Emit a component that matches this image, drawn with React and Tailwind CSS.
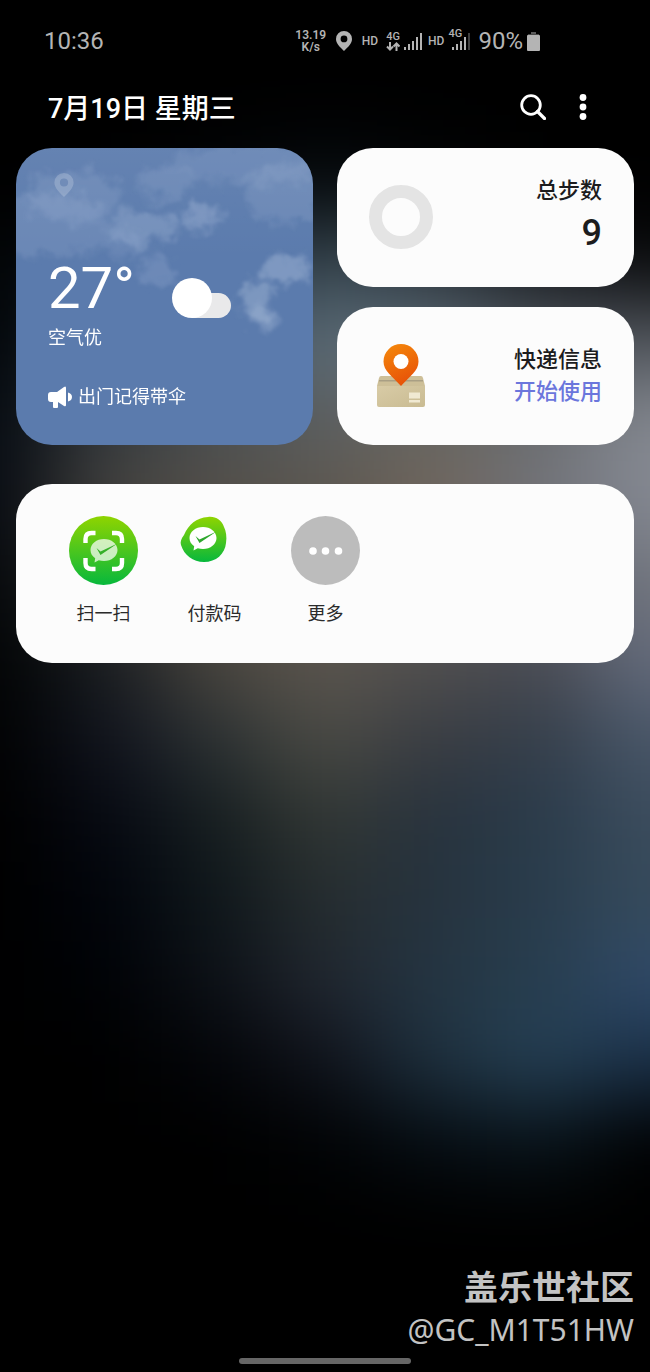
// wallpaper colours, one row every 80 units down and one column every 108 across
const wallpaper = [
  ["#000000", "#000000", "#000000", "#000000", "#000000", "#000000", "#000000"],
  ["#000000", "#000000", "#020406", "#060a0e", "#030506", "#000000", "#000000"],
  ["#020406", "#0a1218", "#202c36", "#36454f", "#2b353d", "#15191d", "#08090b"],
  ["#020509", "#20303a", "#40505c", "#5c6d79", "#5d6a75", "#50565e", "#50555c"],
  ["#070c12", "#34393e", "#4c5052", "#5c5f60", "#66655f", "#6a6d70", "#858991"],
  ["#070b12", "#45433f", "#544f48", "#5c564e", "#72665c", "#72737a", "#858993"],
  ["#05080b", "#343331", "#544c44", "#5b554e", "#605a55", "#5f6068", "#72767f"],
  ["#020405", "#1a1e22", "#4a463f", "#5c564f", "#504f4f", "#484a52", "#656c7d"],
  ["#010203", "#11141e", "#2b3133", "#4a4a44", "#393c42", "#343e4a", "#485668"],
  ["#000000", "#060912", "#161e20", "#323734", "#27323d", "#2a3b4b", "#3b4c5d"],
  ["#000000", "#01040b", "#0f171b", "#262d2f", "#26333e", "#293c4c", "#364b5c"],
  ["#000000", "#000206", "#0d1117", "#212730", "#243542", "#273e4f", "#304a6a"],
  ["#000000", "#000000", "#030509", "#10131b", "#1e303e", "#254055", "#1a3048"],
  ["#000000", "#000000", "#000000", "#010305", "#060d13", "#09141b", "#000102"],
  ["#000000", "#000000", "#000000", "#000000", "#000000", "#000000", "#000000"],
];

function Wallpaper() {
  return (
    <svg className="absolute inset-0 h-full w-full" viewBox="0 0 650 1372" preserveAspectRatio="none" aria-hidden="true">
      <defs>
        <filter id="wall" filterUnits="userSpaceOnUse" x="-200" y="0" width="1050" height="1372" colorInterpolationFilters="sRGB">
          <feGaussianBlur stdDeviation="46 38" />
        </filter>
      </defs>
      <g filter="url(#wall)">
        {wallpaper.map((row, r) =>
          row.map((fill, c) => (
            <rect
              key={`${r}-${c}`}
              x={c === 0 ? -200 : c * 108 - 54}
              y={60 + r * 80}
              width={c === 0 ? 255 : c === 6 ? 260 : 109}
              height={81}
              fill={fill}
            />
          ))
        )}
      </g>
    </svg>
  );
}

function Pin({ className }) {
  return (
    <svg viewBox="0 0 16 20" className={className} fill="currentColor" aria-hidden="true">
      <path fillRule="evenodd" d="M8 0a8 8 0 0 0-8 8c0 4.500 4 8 8 12 4-4 8-7.500 8-12a8 8 0 0 0-8-8zm0 4.500a3.400 3.400 0 1 1 0 6.800 3.400 3.400 0 0 1 0-6.800z" />
    </svg>
  );
}

function Bars({ weakLast }) {
  return (
    <svg viewBox="0 0 18 18" className="h-[18px] w-[18px]" fill="currentColor" aria-hidden="true">
      <rect x="0" y="15" width="2" height="3" />
      <rect x="4" y="12" width="2" height="6" />
      <rect x="8" y="9" width="2" height="9" />
      <rect x="12" y="5" width="2" height="13" />
      <rect x="16" y="1" width="2" height="17" opacity={weakLast ? 0.35 : 1} />
    </svg>
  );
}

function StatusBar() {
  return (
    <div className="flex h-[82px] items-center justify-between pl-11 pr-[110px] text-[#b4b4b4]">
      <div className="text-2xl">10:36</div>
      <div className="flex items-center">
        <div className="flex w-8 flex-col items-center text-[12px] font-semibold leading-3">
          <span>13.19</span>
          <span>K/s</span>
        </div>
        <Pin className="ml-[9px] h-5 w-4" />
        <span className="ml-[10px] text-[12px] font-medium">HD</span>
        <div className="ml-2 flex flex-col items-center text-[11px] font-medium leading-[10px]">
          4G
          <svg viewBox="0 0 14 9" className="h-[9px] w-[14px]" fill="none" stroke="currentColor" strokeWidth="2" aria-hidden="true">
            <path d="M4 0v7M1 4.500l3 3 3-3M10.500 9V2M7.500 4.500l3-3 3 3" />
          </svg>
        </div>
        <div className="ml-1">
          <Bars />
        </div>
        <span className="ml-[6px] text-[12px] font-medium">HD</span>
        <div className="relative ml-2">
          <Bars weakLast />
          <span className="absolute -left-1 -top-1 bg-black pr-px text-[11px] font-medium leading-[11px]">4G</span>
        </div>
        <span className="ml-2 text-2xl">90%</span>
        <svg viewBox="0 0 13 19" className="ml-1 h-[19px] w-[13px]" fill="currentColor" aria-hidden="true">
          <path d="M4 0h5v2H4z" opacity=".5" />
          <path d="M1 2h11v1H1z" opacity=".4" />
          <rect y="3" width="13" height="16" rx="1" />
        </svg>
      </div>
    </div>
  );
}

function Header() {
  return (
    <header className="flex h-[50px] items-center justify-between pl-12 pr-[58px] text-white">
      <h1 className="pt-1 text-[27px] font-medium">7月19日 星期三</h1>
      <div className="flex items-center gap-7">
        <button aria-label="搜索">
          <svg viewBox="0 0 26 26" className="h-[26px] w-[26px]" fill="none" stroke="currentColor" strokeWidth="2.800">
            <circle cx="11" cy="11" r="9.300" />
            <path d="M17.500 17.500l7 7" strokeLinecap="round" strokeWidth="3.200" />
          </svg>
        </button>
        <button aria-label="更多选项" className="px-[5px]">
          <svg viewBox="0 0 8 26" className="h-[26px] w-2" fill="currentColor">
            <circle cx="4" cy="3.500" r="3.400" />
            <circle cx="4" cy="13" r="3.400" />
            <circle cx="4" cy="22.500" r="3.400" />
          </svg>
        </button>
      </div>
    </header>
  );
}

function Clouds() {
  return (
    <svg className="absolute inset-0 h-full w-full" viewBox="0 0 298 298" preserveAspectRatio="none" aria-hidden="true">
      <defs>
        <filter id="cloud" x="-20%" y="-20%" width="140%" height="140%" colorInterpolationFilters="sRGB">
          <feGaussianBlur in="SourceGraphic" stdDeviation="4" result="soft" />
          <feTurbulence type="fractalNoise" baseFrequency="0.06" numOctaves="4" seed="11" result="n" />
          <feDisplacementMap in="soft" in2="n" scale="28" xChannelSelector="R" yChannelSelector="G" />
          <feGaussianBlur stdDeviation="1.200" />
        </filter>
        <linearGradient id="skyTop" x1="0" y1="0" x2="0" y2="1">
          <stop offset="0" stopColor="#fff" stopOpacity=".06" />
          <stop offset="1" stopColor="#fff" stopOpacity="0" />
        </linearGradient>
      </defs>
      <rect width="298" height="110" fill="url(#skyTop)" />
      <g fill="#dce6f5" filter="url(#cloud)">
        <ellipse cx="58" cy="48" rx="50" ry="26" opacity=".12" />
        <ellipse cx="30" cy="78" rx="65" ry="32" opacity=".12" />
        <ellipse cx="126" cy="80" rx="36" ry="17" opacity=".2" />
        <ellipse cx="108" cy="98" rx="24" ry="14" opacity=".1" />
        <ellipse cx="186" cy="70" rx="21" ry="10" opacity=".24" />
        <ellipse cx="150" cy="36" rx="28" ry="16" opacity=".12" />
        <ellipse cx="235" cy="16" rx="85" ry="20" opacity=".1" />
        <ellipse cx="270" cy="45" rx="42" ry="30" opacity=".12" />
        <ellipse cx="142" cy="125" rx="19" ry="15" opacity=".14" />
        <ellipse cx="270" cy="122" rx="25" ry="13" opacity=".28" />
        <ellipse cx="240" cy="152" rx="18" ry="18" opacity=".26" />
        <ellipse cx="248" cy="172" rx="12" ry="14" opacity=".2" />
      </g>
    </svg>
  );
}

function WeatherCard() {
  return (
    <section className="relative aspect-square overflow-hidden rounded-[36px] bg-[#5b7bad] text-white">
      <Clouds />
      <div className="relative flex h-full flex-col px-8 pt-[25px]">
        <Pin className="ml-[6px] h-6 w-5 text-white/20" />
        <div className="mt-[59px] flex items-center">
          <div className="w-[124px] text-[58px] leading-[64px]">27°</div>
          <svg viewBox="0 0 59 40" className="mt-5 h-10 w-[59px]" aria-hidden="true">
            <rect x="20" y="15" width="39" height="25" rx="12.500" fill="#e9e9ea" />
            <path d="M20 20h16v20H20z" fill="#e9e9ea" />
            <circle cx="20" cy="20" r="20" fill="#fff" />
          </svg>
        </div>
        <div className="mt-[6px] text-[18px] leading-6">空气优</div>
        <div className="mt-[35px] flex items-center gap-[6px] text-[18px] leading-6">
          <svg viewBox="0 0 24 22" className="h-[22px] w-6" fill="currentColor" aria-hidden="true">
            <path d="M3 6h6L16 1q2-1.500 2 1v17q0 2-2 1l-6-4v5q0 1-1 1H6q-1 0-1-1v-5H3q-3 0-3-3V9q0-3 3-3z" />
            <path d="M20 6.500q4 1 4 4.500t-4 4.500z" />
          </svg>
          出门记得带伞
        </div>
      </div>
    </section>
  );
}

function InfoCard({ icon, title, children }) {
  return (
    <section className="flex flex-1 items-center justify-between rounded-[36px] bg-[#fcfcfc] px-8 text-[#1c1c1e]">
      <div className="flex w-16 justify-center">{icon}</div>
      <div className="flex flex-col items-end">
        <h2 className="text-[22px] font-medium leading-8">{title}</h2>
        {children}
      </div>
    </section>
  );
}

function ParcelIcon() {
  return (
    <svg viewBox="0 0 48 66" className="h-[66px] w-12" aria-hidden="true">
      <defs>
        <linearGradient id="pin" x1="0" y1="0" x2=".4" y2="1">
          <stop offset="0" stopColor="#f58a0b" />
          <stop offset="1" stopColor="#e85408" />
        </linearGradient>
        <linearGradient id="box" x1="0" y1="0" x2="1" y2="1">
          <stop offset="0" stopColor="#d8cba6" />
          <stop offset="1" stopColor="#c9bb92" />
        </linearGradient>
      </defs>
      <path d="M4 33h40q1.500 0 2 2l2 8H0l2-8q.5-2 2-2z" fill="#cdbf98" />
      <path d="M2 37h44v1.500H2z" fill="#a99f84" />
      <path d="M0 43h48v19q0 2-2 2H2q-2 0-2-2z" fill="url(#box)" />
      <path d="M32 49.500h11v6H32zM32 57h11v2.500H32z" fill="#f0e9d2" />
      <path d="M24 1A17.500 17.500 0 0 0 6.500 18.500C6.500 28 15 33 24 43c9-10 17.500-15 17.500-24.500A17.500 17.500 0 0 0 24 1z" fill="url(#pin)" />
      <circle cx="24" cy="18.500" r="7.500" fill="#fff" />
    </svg>
  );
}

function PayBubble() {
  return (
    <>
      <path d="M14 0C6.500 0 .5 4.900.5 11c0 3.300 1.800 6.300 4.700 8.300L4.500 23.500l4.300-2.300c1.600.5 3.300.8 5.200.8 7.500 0 13.500-4.900 13.500-11S21.500 0 14 0z" fill="#fff" />
      <path d="M6.500 9l4 3.500L27.500 4.500 10.500 16z" fill="#2ea82e" />
    </>
  );
}

function GreenFill({ id }) {
  return (
    <defs>
      <linearGradient id={id} x1="0" y1="0" x2="0" y2="1">
        <stop offset="0" stopColor="#8fd400" />
        <stop offset="1" stopColor="#07b83c" />
      </linearGradient>
    </defs>
  );
}

function ScanIcon() {
  return (
    <svg viewBox="0 0 69 69" className="h-[69px] w-[69px]" aria-hidden="true">
      <GreenFill id="scan" />
      <circle cx="34.500" cy="34.500" r="34.500" fill="url(#scan)" />
      <path d="M16.500 27v-4q0-6 6-6h4M43 17h4q6 0 6 6v4M53 42v5q0 6-6 6h-4M26.500 53h-4q-6 0-6-6v-5" fill="none" stroke="#fff" strokeWidth="4.400" />
      <g transform="translate(21 23)" opacity=".72">
        <PayBubble />
      </g>
    </svg>
  );
}

function PayIcon() {
  return (
    <svg viewBox="0 0 69 69" className="h-[69px] w-[69px]" aria-hidden="true">
      <GreenFill id="pay" />
      <path d="M28 1C16 2 9 8 4 19 1 23 0 26 1 29c3 10 12 17 23 17 12 0 21-8 22-19 1-6 0-12-2-16C42 4 35 0 28 1z" fill="url(#pay)" />
      <g transform="translate(9 11)">
        <PayBubble />
      </g>
    </svg>
  );
}

function MoreIcon() {
  return (
    <svg viewBox="0 0 69 69" className="h-[69px] w-[69px]" aria-hidden="true">
      <circle cx="34.500" cy="34.500" r="34.500" fill="#bcbcbc" />
      <g fill="#fff">
        <circle cx="22" cy="35" r="3.800" />
        <circle cx="34.500" cy="35" r="3.800" />
        <circle cx="47.500" cy="35" r="3.800" />
      </g>
    </svg>
  );
}

const shortcuts = [
  { label: "扫一扫", Icon: ScanIcon },
  { label: "付款码", Icon: PayIcon },
  { label: "更多", Icon: MoreIcon },
];

export default function App() {
  return (
    <div className="relative flex min-h-screen flex-col bg-black font-[Roboto,'Noto_Sans_CJK_SC',sans-serif]">
      <Wallpaper />
      <div className="relative flex flex-1 flex-col">
        <StatusBar />
        <Header />
        <main className="px-4 pt-4">
          <div className="grid grid-cols-2 gap-6">
            <WeatherCard />
            <div className="flex flex-col gap-5">
              <InfoCard title="总步数" icon={<div className="h-16 w-16 rounded-full border-[13px] border-[#e4e4e4]" />}>
                <div className="text-[36px] font-medium leading-[52px]">9</div>
              </InfoCard>
              <InfoCard title="快递信息" icon={<ParcelIcon />}>
                <a href="#" className="text-[22px] font-medium leading-8 text-[#6b76dc]">开始使用</a>
              </InfoCard>
            </div>
          </div>

          <section className="mt-[39px] flex rounded-[36px] bg-[#fcfcfc] px-8 pb-9 pt-8 text-[#2a2a2a]">
            {shortcuts.map(({ label, Icon }) => (
              <button key={label} className="flex w-[111px] flex-col items-center gap-4 text-[18px] leading-[26px]">
                <Icon />
                {label}
              </button>
            ))}
          </section>
        </main>

        <footer className="mt-auto flex flex-col pb-2 text-[#c3c3c3]">
          <div className="flex flex-col items-end px-4">
            <div className="font-['Noto_Sans_CJK_SC',sans-serif] text-[34px] font-bold leading-[44px]">盖乐世社区</div>
            <div className="font-['Noto_Sans',sans-serif] text-[30px] leading-[44px]">@GC_M1T51HW</div>
          </div>
          <div className="mt-[6px] h-[6px] w-[172px] self-center rounded-full bg-[#666]" />
        </footer>
      </div>
    </div>
  );
}
